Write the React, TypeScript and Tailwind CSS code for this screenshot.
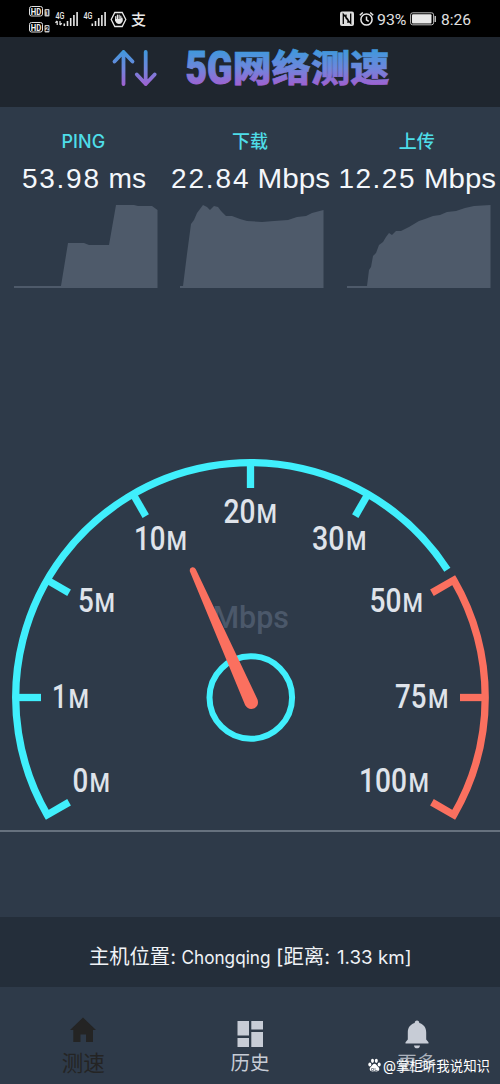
import React from "react";

type Part = { t: string; x: number; w: number; adjust: "spacing" | "spacingAndGlyphs" };
type Stat = { label: string; parts: Part[]; area: string };

const stats: Stat[] = [
  {
    label: "PING",
    parts: [
      { t: "53.98", x: 22, w: 77, adjust: "spacing" },
      { t: "ms", x: 108.5, w: 37.5, adjust: "spacingAndGlyphs" },
    ],
    area: "0,82 47,82 54,39 70,39 75,41 95,41 102,1 120,1 124,2 138,2 143.500,6 143.500,84 0,84",
  },
  {
    label: "下载",
    parts: [
      { t: "22.84", x: 4, w: 77.5, adjust: "spacing" },
      { t: "Mbps", x: 90.5, w: 72.5, adjust: "spacingAndGlyphs" },
    ],
    area: "0,82 3,82 7,50 11,20 14,16 17,9 20,5 23,1 27,3 30,6 34,2 38,3 41,7 46,12 52,12 60,15 67,17 82,18 94,17 108,16 117,13 126,12 132,9 143.500,6 143.500,84 0,84",
  },
  {
    label: "上传",
    parts: [
      { t: "12.25", x: 5.5, w: 76, adjust: "spacing" },
      { t: "Mbps", x: 91, w: 72, adjust: "spacingAndGlyphs" },
    ],
    area: "0,82 20,82 22,66 24,63 26,52 29,49 32,41 36,38 39,33 42,29 45,31 49,27 54,27 62,23 72,17 78,15 86,12 93,11 100,8 109,7 118,4 127,2 143.500,1 143.500,84 0,84",
  },
];

type Mark = { n: string; x: number; w: number; mx: number; y: number };

const marks: Mark[] = [
  { n: "0", x: 72.5, w: 15.8, mx: 90, y: 792 },
  { n: "1", x: 52, w: 15, mx: 69, y: 708 },
  { n: "5", x: 78, w: 15.8, mx: 95, y: 612 },
  { n: "10", x: 134, w: 31.5, mx: 167, y: 550 },
  { n: "20", x: 223.5, w: 32, mx: 257, y: 522.5 },
  { n: "30", x: 312, w: 32.5, mx: 346.5, y: 550 },
  { n: "50", x: 369.5, w: 32, mx: 403, y: 612 },
  { n: "75", x: 395, w: 31.5, mx: 428.5, y: 708 },
  { n: "100", x: 359, w: 48, mx: 409, y: 792 },
];

const CX = 250.5;
const CY = 697.5;
const R = 234.7;

const at = (deg: number, r: number) => {
  const a = (deg * Math.PI) / 180;
  return `${(CX + r * Math.cos(a)).toFixed(2)} ${(CY - r * Math.sin(a)).toFixed(2)}`;
};

function Signal({ transfer }: { transfer?: boolean }) {
  return (
    <svg width="24" height="18" viewBox="0 0 24 18" fill="#e8e8e8">
      <text x="0.500" y="8.500" fontSize="9.500" fontWeight="500" textLength="9" lengthAdjust="spacingAndGlyphs" className="font-['Roboto']">4G</text>
      {transfer && <path d="M2.200 11v4M0.400 12.700l1.800-1.700M5 11v4M6.800 13.300 5 15" fill="none" stroke="#e8e8e8" strokeWidth="1.200" />}
      <path d="M8.500 13.500h1.600V16H8.500zM11.700 11h1.600v5h-1.600zM14.900 8h1.600v8h-1.600zM18.100 5h1.600v11h-1.600zM21.300 2h1.600v14h-1.600z" />
    </svg>
  );
}

function HdBadge({ n }: { n: string }) {
  return (
    <svg width="21" height="11" viewBox="0 0 21 11">
      <rect x="0.500" y="0.500" width="13" height="9.500" rx="2" fill="none" stroke="#e0e0e0" />
      <text x="1.800" y="8.600" fontSize="9.500" fontWeight="700" textLength="10.500" lengthAdjust="spacingAndGlyphs" fill="#f0f0f0" className="font-['Roboto']">HD</text>
      <rect x="15.500" y="3" width="5" height="7.500" rx="1" fill="#c8c8c8" />
      <text x="16.300" y="9" fontSize="6.500" fontWeight="700" fill="#000" className="font-['Roboto']">{n}</text>
    </svg>
  );
}

function StatusBar() {
  return (
    <div className="flex h-[37px] shrink-0 items-center bg-black pl-[29px] pr-[28px] pt-[1px] text-[#e8e8e8]">
      <div className="flex flex-col gap-[5px]">
        <HdBadge n="1" />
        <HdBadge n="2" />
      </div>
      <div className="ml-[5px] flex items-center">
        <Signal transfer />
        <div className="ml-[4px] flex"><Signal /></div>
        <svg className="ml-[3px]" width="17" height="17" viewBox="0 0 17 17">
          <path d="M4.800 1.500h7.400l3.600 7-3.600 7H4.800l-3.600-7z" fill="none" stroke="#e8e8e8" strokeWidth="1.300" />
          <path d="M5.700 5.500v4M7.400 4.200v5M9.100 4v5M10.800 5v5M12 7v3" stroke="#e8e8e8" strokeWidth="1.200" strokeLinecap="round" />
          <path d="M5.100 8h7.300v2.500Q11.500 13 9 13T5.100 9.800z" fill="#e8e8e8" />
        </svg>
        <span className="ml-[4px] -mt-px text-[15px] font-medium leading-none font-['Noto_Sans_CJK_SC',sans-serif]">支</span>
      </div>
      <div className="ml-auto flex items-center">
        <svg width="14" height="16" viewBox="0 0 14 16">
          <rect x="0" y="0.500" width="14" height="14.500" rx="2" fill="#dedede" />
          <path d="M3.300 13V3.300L8 8.500v3.500M10.700 2.500v9.700L6 7V3.500" fill="none" stroke="#000" strokeWidth="1.300" />
        </svg>
        <svg className="ml-[5px]" width="15" height="16" viewBox="0 0 15 16" fill="none" stroke="#e8e8e8" strokeWidth="1.500">
          <circle cx="7.500" cy="8.500" r="5.600" />
          <path d="M7.500 5.500v3.300l2.200 1.500M0.800 4.300 3.800 1.500M14.200 4.300l-3-2.800" />
        </svg>
        <svg className="ml-[3px]" width="31" height="20" viewBox="0 0 31 20" fill="#e0e0e0">
          <text x="0" y="15.500" fontSize="15.500" textLength="29.500" lengthAdjust="spacingAndGlyphs" className="font-['Roboto',sans-serif]">93%</text>
        </svg>
        <svg className="ml-[2px]" width="26" height="14" viewBox="0 0 26 14">
          <rect x="0.600" y="0.800" width="23" height="12" rx="2" fill="none" stroke="#bdbdbd" />
          <rect x="2" y="2.200" width="19.500" height="9.200" rx="1" fill="#e8e8e8" />
          <rect x="24.500" y="4" width="1.500" height="6" fill="#bdbdbd" />
        </svg>
        <svg className="ml-[5px]" width="31" height="20" viewBox="0 0 31 20" fill="#e0e0e0">
          <text x="0" y="15.500" fontSize="15.500" textLength="30" lengthAdjust="spacingAndGlyphs" className="font-['Roboto',sans-serif]">8:26</text>
        </svg>
      </div>
    </div>
  );
}

function Logo() {
  return (
    <header className="flex h-[70px] shrink-0 justify-center bg-[#1f262f]">
      <svg width="500" height="70" viewBox="0 37 500 70">
        <defs>
          <linearGradient id="brand" gradientUnits="userSpaceOnUse" x1="0" y1="51" x2="0" y2="86">
            <stop offset="0" stopColor="#4198dc" />
            <stop offset="0.500" stopColor="#6f86dc" />
            <stop offset="1" stopColor="#a060d0" />
          </linearGradient>
        </defs>
        <path d="M123.500 84V52M114.500 61.500l9-9.500 9 9.500M145.700 52v32M136.800 74.500l8.900 9.500 9-9.500" fill="none" stroke="url(#brand)" strokeWidth="3.800" strokeLinecap="round" strokeLinejoin="round" />
        <g fill="url(#brand)" stroke="url(#brand)">
          <text x="185.500" y="84.300" fontSize="45.500" fontWeight="900" textLength="47" lengthAdjust="spacingAndGlyphs" strokeWidth="1" className="font-['Roboto',sans-serif]">5G</text>
          <text x="232.500" y="81.700" fontSize="37" fontWeight="900" textLength="157" lengthAdjust="spacingAndGlyphs" strokeWidth="0.600" className="font-['Noto_Sans_CJK_SC',sans-serif]">网络测速</text>
        </g>
      </svg>
    </header>
  );
}

function Stats() {
  return (
    <section className="grid h-[181px] shrink-0 grid-cols-3">
      {stats.map((s) => (
        <div key={s.label} className="flex flex-col items-center pt-[23px]">
          <div className="h-[24px] text-[18px] font-medium leading-[24px] text-[#4edde8] font-['Inter','Noto_Sans_CJK_SC',sans-serif]">{s.label}</div>
          <svg className="mt-[4px] w-[167px]" height="40" viewBox="0 0 167 40" fill="#f4f7fb">
            {s.parts.map((p) => (
              <text key={p.t} x={p.x} y="29.500" fontSize="28" textLength={p.w} lengthAdjust={p.adjust} className="font-['Liberation_Sans',sans-serif]">{p.t}</text>
            ))}
          </svg>
          <svg className="ml-[5px] mt-[6px]" width="144" height="84" viewBox="0 0 144 84">
            <polygon points={s.area} fill="#4e5a6a" />
          </svg>
        </div>
      ))}
    </section>
  );
}

function Gauge() {
  return (
    <svg className="mt-[152px] shrink-0" width="500" height="390" viewBox="0 440 500 390">
      <g fill="#dfe3ea" className="font-['Roboto',sans-serif]" fontWeight="500">
        {marks.map((m) => (
          <text key={m.n} y={m.y} fontSize="34">
            <tspan x={m.x} textLength={m.w} lengthAdjust="spacingAndGlyphs">{m.n}</tspan>
            <tspan x={m.mx - 0.5} fontSize="25.500" textLength="20.500" lengthAdjust="spacingAndGlyphs">M</tspan>
          </text>
        ))}
        <text x="212.500" y="628" fontSize="32" fill="#4b586a" textLength="76.500" lengthAdjust="spacingAndGlyphs">Mbps</text>
      </g>
      <g fill="none" stroke="#40effc" strokeWidth="7.300">
        <path d={`M${at(210, 209.5)}L${at(210, R)}A${R} ${R} 0 0 1 ${at(33, R)}`} />
        {[180, 150, 120, 90, 60].map((d) => (
          <path key={d} d={`M${at(d, 209.5)}L${at(d, R)}`} />
        ))}
        <circle cx="250.800" cy="697.500" r="41.300" strokeWidth="6" />
      </g>
      <g fill="none" stroke="#fb705f" strokeWidth="7.300">
        <path d={`M${at(30, 209.5)}L${at(30, R)}A${R} ${R} 0 0 1 ${at(-30, R)}L${at(-30, 209.5)}`} />
        <path d={`M${at(0, 209.5)}L${at(0, R)}`} />
      </g>
      <path d="M189.800 571.200Q189.500 567.700 192.300 567.200Q194.500 566.800 195.800 569.300L257.500 699.500Q259.300 705.500 254.500 708.200Q248.500 710.500 245.200 705.200Z" fill="#fb705f" />
    </svg>
  );
}

function NavItem({ label, tone, children }: { label: string; tone: string; children: React.ReactNode }) {
  return (
    <div className={`flex flex-col items-center ${tone}`}>
      {children}
      <span className="leading-[28px]">{label}</span>
    </div>
  );
}

export default function App() {
  return (
    <div className="flex h-[1084px] w-[500px] flex-col overflow-hidden bg-[#2e3a49] font-['Inter','Noto_Sans_CJK_SC',sans-serif]">
      <StatusBar />
      <Logo />
      <Stats />
      <Gauge />
      <div className="h-[2px] shrink-0 bg-[#66717e]" />
      <div className="h-[85px] shrink-0" />
      <div className="flex h-[70px] shrink-0 items-center justify-center bg-[#242e3a] pt-[9px]">
        <svg width="324" height="34" viewBox="0 0 324 34" fill="#f0f3f7">
          <text x="1" y="24" fontSize="20" textLength="87" lengthAdjust="spacingAndGlyphs">主机位置:</text>
          <text x="93.500" y="24" fontSize="18" textLength="89" lengthAdjust="spacingAndGlyphs">Chongqing</text>
          <text x="188" y="24" fontSize="20" textLength="54" lengthAdjust="spacingAndGlyphs">[距离:</text>
          <text x="249" y="24" fontSize="18" textLength="74.500" lengthAdjust="spacingAndGlyphs">1.33 km]</text>
        </svg>
      </div>
      <nav className="relative grid h-[97px] shrink-0 grid-cols-3 pt-[28px]">
        <NavItem label="测速" tone="text-[#242424] text-[21.5px]">
          <svg width="34" height="34" viewBox="0 0 34 34" fill="currentColor">
            <path d="M17 2.500 30 15H27V27H20V19.500h-5.500V27H7.300V15H4z" />
          </svg>
        </NavItem>
        <NavItem label="历史" tone="text-[#c7ccd6] text-[19.5px]">
          <svg width="34" height="34" viewBox="0 0 34 34" fill="currentColor">
            <path d="M4.500 6H16v14.500H4.500zM18.300 6H30v8.500H18.300zM4.500 23H16v9H4.500zM18.300 17H30v15H18.300z" />
          </svg>
        </NavItem>
        <NavItem label="更多" tone="text-[#aab1bc] text-[19.5px]">
          <svg width="34" height="34" viewBox="0 0 34 34" fill="#c7ccd6">
            <path d="M17 5.500c1.500 0 2.300 1 2.300 2.600 4.700 1.300 6.900 5 6.900 9.500v6.900l2.300 2.700v1.300h-23v-1.300l2.300-2.700v-6.900c0-4.500 2.200-8.200 6.900-9.500 0-1.600.8-2.600 2.300-2.600zM14 30.500h6c-.2 2-1.400 2.800-3 2.800s-2.800-.8-3-2.800z" />
          </svg>
        </NavItem>
        <div className="absolute left-[368px] top-[66px] flex h-[24px] items-center gap-[2px]">
          <svg width="13" height="14" viewBox="0 0 13 14" fill="#fff">
            <ellipse cx="1.800" cy="6.500" rx="1.500" ry="2" />
            <ellipse cx="4.500" cy="2.800" rx="1.500" ry="2.100" />
            <ellipse cx="8.300" cy="2.800" rx="1.500" ry="2.100" />
            <ellipse cx="11.200" cy="6.500" rx="1.500" ry="2" />
            <path d="M6.500 5.800c1.600 0 2.100 1.600 3.300 2.700 1.300 1.200 1.700 2 1.400 3.200-.4 1.600-2 1.900-4.700 1.600-2.700.3-4.300 0-4.700-1.600-.3-1.200.1-2 1.400-3.200 1.200-1.100 1.700-2.700 3.300-2.700z" />
            <path d="M3.500 10.500h2v2h-2zM7 10v2.500h2.500" fill="none" stroke="#596370" strokeWidth=".7" />
          </svg>
          <svg width="116" height="28" viewBox="0 0 116 28" fill="#fff">
            <text x="0" y="19.500" fontSize="14" textLength="107" lengthAdjust="spacingAndGlyphs">@掌柜听我说知识</text>
          </svg>
        </div>
      </nav>
    </div>
  );
}
